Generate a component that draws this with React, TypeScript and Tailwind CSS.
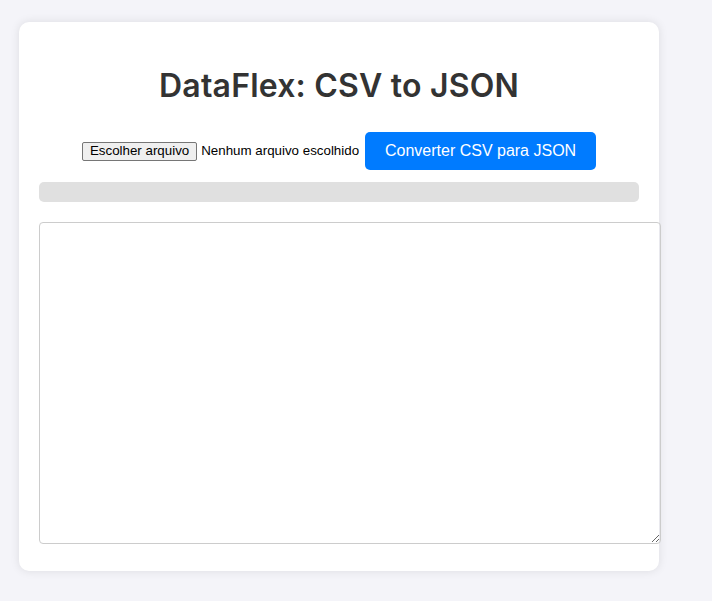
export default function App() {
  return (
    <div className="min-h-screen w-full bg-[#f4f4f9] pt-[22px] pl-[19px] font-['Liberation_Sans',Arial,sans-serif]">
      <div className="w-[640px] h-[549px] bg-white rounded-[10px] shadow-[0_0_10px_rgba(0,0,0,0.1)] p-5">
        <h1 className="mt-[20px] text-center text-[32px] leading-[48px] font-semibold text-[#333] font-['Inter','Noto_Sans',sans-serif] tracking-[0.2px]">
          DataFlex: CSV to JSON
        </h1>
        <div className="mt-[22px] flex items-center justify-center">
          <button className="h-[19px] px-[7px] text-[13.33px] leading-none text-black bg-[#efefef] border border-[#767676] rounded-[2px]">
            Escolher arquivo
          </button>
          <span className="ml-[4px] text-[13.33px] text-black">Nenhum arquivo escolhido</span>
          <button className="ml-[6px] h-[38px] w-[231px] bg-[#007bff] text-white text-[16px] rounded-[5px]">
            Converter CSV para JSON
          </button>
        </div>
        <div className="mt-[12px] h-[20px] w-full bg-[#e0e0e0] rounded-[5px]"></div>
        <textarea className="mt-[20px] block w-[622px] h-[322px] border border-[#ccc] rounded-[4px] p-[10px] text-[14px] outline-none"></textarea>
      </div>
    </div>
  );
}
